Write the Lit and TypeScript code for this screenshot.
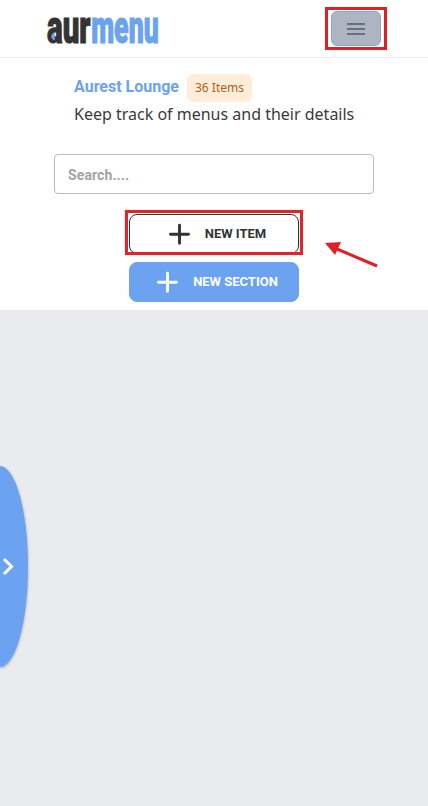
import { html, css, LitElement } from 'lit'
import { customElement, property } from 'lit/decorators.js'

@customElement('menu-button')
export class MenuButton extends LitElement {
  @property()
  label = ''

  @property({ type: Boolean, reflect: true })
  primary = false

  render() {
    return html`
      <button>
        <svg width="22" height="22" viewBox="0 0 22 22">
          <path d="M11.500 2.300v18M2.500 11.300h18" />
        </svg>
        <span>${this.label}</span>
      </button>
    `
  }

  static styles = css`
    :host {
      display: block;
      width: 170px;
      height: 40px;
    }

    button {
      box-sizing: border-box;
      display: flex;
      align-items: center;
      justify-content: center;
      gap: 15px;
      width: 100%;
      height: 100%;
      padding: 0 0 1px 6px;
      border: 1px solid #333;
      border-radius: 8px;
      background: #fff;
      color: #333;
      font: 700 13px Roboto, sans-serif;
    }

    :host([primary]) button {
      border-color: #6ba3f0;
      background: #6ba3f0;
      color: #fff;
    }

    svg {
      margin-top: 1px;
      fill: none;
      stroke: currentColor;
      stroke-width: 2.9;
      stroke-linecap: round;
    }
  `
}

@customElement('app-root')
export class AppRoot extends LitElement {
  @property({ type: Number })
  count = 36

  render() {
    return html`
      <header>
        <svg class="logo" width="118" height="56" viewBox="0 0 118 56" aria-label="aurmenu">
          <text class="dark" x="1" y="40.2" textLength="43.5" lengthAdjust="spacingAndGlyphs">aur</text>
          <text class="blue" x="45.2" y="40.2" textLength="67.5" lengthAdjust="spacingAndGlyphs">menu</text>
          <path class="drop" d="M8.800 29.500q-3.600 1-3.600 4t3.600 3.700z" />
        </svg>
        <div class="mark">
          <button class="nav" aria-label="Menu">
            <svg width="18" height="12" viewBox="0 0 18 12">
              <path d="M0 1h18M0 6h18M0 11h18" />
            </svg>
          </button>
        </div>
      </header>
      <section class="panel">
        <div class="intro">
          <div class="title">
            <h1>Aurest Lounge</h1>
            <span class="badge">${this.count} Items</span>
          </div>
          <p>Keep track of menus and their details</p>
        </div>
        <input type="text" placeholder="Search...." />
        <div class="actions">
          <div class="spot">
            <menu-button label="NEW ITEM"></menu-button>
            <div class="outline"></div>
            <svg class="arrow" width="56" height="28" viewBox="0 0 56 28">
              <path d="M54 25L14 8" />
              <polygon points="2,2 18,1 12,14" />
            </svg>
          </div>
          <menu-button primary label="NEW SECTION"></menu-button>
        </div>
      </section>
      <main>
        <div class="drawer">
          <svg width="13" height="20" viewBox="0 0 13 20">
            <path d="M2 2l7.500 7.500-7.500 7.500" />
          </svg>
        </div>
      </main>
    `
  }

  static styles = css`
    :host {
      display: flex;
      flex-direction: column;
      height: 806px;
      overflow: hidden;
      background: #fff;
      color: #3a3a3a;
      font-family: 'Noto Sans', sans-serif;
    }

    header {
      box-sizing: border-box;
      display: flex;
      align-items: center;
      justify-content: space-between;
      height: 58px;
      padding: 0 41px 0 46px;
      border-bottom: 1px solid #ebedef;
    }

    .logo {
      margin-top: 5px;
      font: 900 46px Roboto, sans-serif;
      stroke-width: 1.1;
    }

    .dark {
      fill: #333;
      stroke: #333;
    }

    .blue {
      fill: #6ba3f0;
      stroke: #6ba3f0;
    }

    .drop {
      fill: #6ba3f0;
    }

    .mark {
      box-sizing: border-box;
      width: 62px;
      height: 43px;
      padding: 1px 2.5px;
      border: 3px solid #e02025;
    }

    .nav {
      box-sizing: border-box;
      display: grid;
      place-items: center;
      width: 50px;
      height: 35px;
      padding: 0;
      border: 1px solid #9aa7b2;
      border-radius: 6px;
      background: #adb5c3;
    }

    .nav svg {
      stroke: #687080;
      stroke-width: 1.8;
    }

    .panel {
      display: flex;
      flex-direction: column;
      height: 252px;
    }

    .intro {
      height: 80px;
      padding: 16px 0 0 74px;
    }

    .title {
      display: flex;
      gap: 8px;
      height: 28px;
    }

    h1 {
      margin: 0;
      color: #6ba3f0;
      font: 700 16px/26px Roboto, sans-serif;
    }

    .badge {
      padding: 0 8px;
      border-radius: 6px;
      background: #ffedd9;
      color: #a8640f;
      font-size: 12px;
      line-height: 28px;
    }

    p {
      margin: 0;
      font-size: 16px;
      line-height: 24px;
    }

    input {
      box-sizing: border-box;
      width: 320px;
      height: 40px;
      margin: 0 54px;
      padding: 2px 13px 0;
      border: 1px solid #bbb;
      border-radius: 4px;
      font: 700 14px Roboto, sans-serif;
      letter-spacing: 0.1px;
    }

    input::placeholder {
      color: #a3a3a3;
    }

    .actions {
      display: grid;
      justify-content: center;
      gap: 8px;
      padding-top: 20px;
    }

    .spot {
      position: relative;
    }

    .outline {
      position: absolute;
      inset: -4px -4px -1px -4px;
      border: 3px solid #d9272b;
      box-shadow: 0 0 1px #f0a0a2;
    }

    .arrow {
      position: absolute;
      left: 194px;
      top: 27px;
      fill: #e02025;
    }

    .arrow path {
      stroke: #e02025;
      stroke-width: 3;
    }

    main {
      display: flex;
      flex: 1;
      padding-top: 156px;
      background: #eaebef;
    }

    .drawer {
      box-sizing: border-box;
      display: flex;
      align-items: center;
      width: 28px;
      height: 201px;
      padding-left: 2px;
      border-radius: 0 100% 100% 0 / 0 50% 50% 0;
      background: #6ba3f0;
      box-shadow: 0 1px 3px rgba(0, 0, 0, 0.3);
    }

    .drawer path {
      fill: none;
      stroke: #fff;
      stroke-width: 3;
    }
  `
}
